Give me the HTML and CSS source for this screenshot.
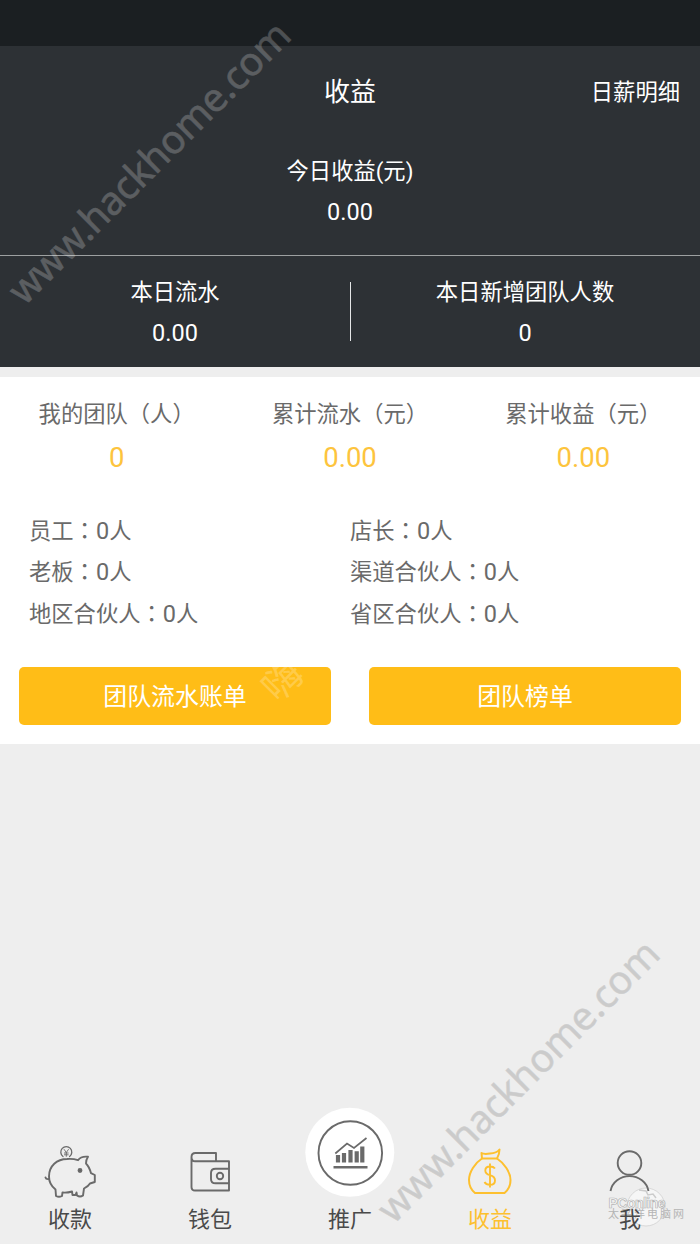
FILE: index.html
```html
<!DOCTYPE html>
<html lang="zh-CN">
<head>
<meta charset="utf-8">
<title>收益</title>
<link rel="stylesheet" href="styles.css">
</head>
<body>
<div class="screen">
  <div class="status"></div>
  <header class="hero">
    <div class="bar"><span></span><h1>收益</h1><a class="detail">日薪明细</a></div>
    <div class="today"><div>今日收益(元)</div><div class="num">0.00</div></div>
    <div class="daily">
      <div class="cell"><div>本日流水</div><div class="num">0.00</div></div>
      <div class="divider"></div>
      <div class="cell"><div>本日新增团队人数</div><div class="num">0</div></div>
    </div>
  </header>
  <main class="panel">
    <div class="totals">
      <div><div class="label">我的团队（人）</div><div class="value">0</div></div>
      <div><div class="label">累计流水（元）</div><div class="value">0.00</div></div>
      <div><div class="label">累计收益（元）</div><div class="value">0.00</div></div>
    </div>
    <div class="roles">
      <div>员工<i lang="zh-TW">：</i><em>0</em>人</div><div>店长<i lang="zh-TW">：</i><em>0</em>人</div>
      <div>老板<i lang="zh-TW">：</i><em>0</em>人</div><div>渠道合伙人<i lang="zh-TW">：</i><em>0</em>人</div>
      <div>地区合伙人<i lang="zh-TW">：</i><em>0</em>人</div><div>省区合伙人<i lang="zh-TW">：</i><em>0</em>人</div>
    </div>
    <div class="actions"><div class="btn">团队流水账单</div><div class="btn">团队榜单</div></div>
  </main>
  <nav class="tabs">
    <div class="tab">
      <svg class="icon" viewBox="40 1140 60 64" fill="none" stroke="#6a6a6a" stroke-width="1.9" stroke-linecap="round" stroke-linejoin="round">
        <path d="M63 1156.500A5.500 5.500 0 1 1 69.600 1156.500" stroke-width="1.300"/>
        <path d="M64.200 1149.500l2.100 3 2.100-3M66.300 1152.500v3.800M64.400 1153h3.800M64.400 1154.800h3.800" stroke-width="0.900"/>
        <path d="M78 1160.200C80 1157.500 84 1156.300 88 1156.800C86.500 1159 86 1161 86 1163.500C88.500 1166 90 1169.500 91 1173.200L94.800 1175V1182L90 1183.500C88.500 1186 86 1187.500 84 1188.500L83 1195.500Q80 1197.500 77 1195.500L76.500 1192.500L75.500 1195H72.500L72 1191.500Q67 1193 62.500 1192.500L62 1196Q59 1197.500 56 1196L55.500 1189.500C51 1186 49 1181 49 1176.500C49 1166 57 1159 67 1159Q73 1158.500 78 1160.200Z"/>
        <path d="M49 1179Q46 1179.500 45.500 1177.500"/>
        <circle cx="80" cy="1170.500" r="1.500" fill="#555"/>
      </svg><span>收款</span>
    </div>
    <div class="tab">
      <svg class="icon" viewBox="180 1140 60 64" fill="none" stroke="#6a6a6a" stroke-width="1.900" stroke-linejoin="round">
        <path d="M216 1161V1153H195.500Q191.500 1153 191.500 1157V1187Q191.500 1190.500 195 1190.500H229V1161.300H195Q191.500 1161.300 191.500 1157"/>
        <path d="M229 1168.700H215.500Q211 1168.700 211 1173V1179Q211 1183.300 215.500 1183.300H229"/>
        <circle cx="220" cy="1176" r="3.200"/>
      </svg><span>钱包</span>
    </div>
    <div class="tab raised">
      <svg class="disc" viewBox="305 1107 90 90" fill="none" stroke="#6a6a6a">
        <circle cx="349.800" cy="1152.300" r="44.500" fill="#fff" stroke="none"/>
        <circle cx="350.300" cy="1153" r="31.800" stroke-width="1.900"/>
        <path d="M335.300 1153.500L347 1143.500L354 1148L366.500 1138" stroke-width="1.700"/>
        <path d="M338 1162.500V1155M344 1162.500V1153M350.500 1162.500V1150M356.700 1162.500V1151.300M362.300 1162.500V1146.500" stroke-width="4.200"/>
        <path d="M333.500 1167.200H367.500" stroke-width="2.500"/>
      </svg><span>推广</span>
    </div>
    <div class="tab active">
      <svg class="icon" viewBox="460 1140 60 64" fill="none" stroke="#fdc02f" stroke-width="2" stroke-linejoin="round">
        <path d="M482 1158.500L481.500 1153Q484 1154.500 490 1153.500Q497 1153 499.500 1149.500Q499.500 1154 497 1158.500Z"/>
        <path d="M482 1158.500C475 1163 469 1172 469 1180Q469 1188 475 1193H504.500Q510.500 1188 510.500 1180C510.500 1172 504 1163 497 1158.500"/>
        <path d="M495 1168.500Q493.500 1166.500 490 1166.500Q485.300 1166.500 485.300 1170.500Q485.300 1174 490 1175.200Q495 1176.500 495 1180.500Q495 1184.800 490 1184.800Q486 1184.800 484.500 1182M490 1163.500V1187.500" stroke-width="1.900"/>
      </svg><span>收益</span>
    </div>
    <div class="tab">
      <svg class="icon" viewBox="600 1140 60 64" fill="none" stroke="#6a6a6a" stroke-width="1.900">
        <circle cx="629.500" cy="1163" r="11.800"/>
        <path d="M610.500 1191A19.300 18 0 0 1 648.500 1191"/>
      </svg><span>我</span>
    </div>
  </nav>
  <svg class="pc" viewBox="604 1184 84 46">
    <circle cx="646" cy="1207" r="19" fill="#f6f6f6" stroke="#d0d0d0" stroke-width=".8"/>
    <path d="M639 1190l7 1 2 4 5-1 3 4" fill="none" stroke="#ccc" stroke-width="1.500"/>
    <text x="608.500" y="1208" class="brand" textLength="57">PConline</text>
    <text x="608" y="1218" class="sub" textLength="76">太平洋电脑网</text>
  </svg>
  <svg class="marks" viewBox="0 0 700 1244">
    <g class="site">
      <text transform="translate(24.500 306.500) rotate(-45)" textLength="380" fill="#fff" stroke="#fff" opacity=".22">www.hackhome.com</text>
      <text transform="translate(393.500 1225) rotate(-45)" textLength="380" fill="#000" stroke="#000" opacity=".14">www.hackhome.com</text>
    </g>
    <text class="hai" transform="translate(280 678) rotate(-45)">嗨</text>
  </svg>
</div>
</body>
</html>
```
FILE: styles.css
```css
* { box-sizing: border-box; }
body { margin: 0; font-family: Roboto, "Noto Sans CJK SC", sans-serif; font-size: 22.3px; line-height: 42px; color: #6a6a6a; }
.screen { position: relative; width: 700px; height: 1244px; background: #eee; display: flex; flex-direction: column; overflow: hidden; }
.status { height: 46px; background: #1b1f22; }
.hero { height: 321px; background: #2d3135; color: #fff; }
.bar { height: 90px; padding: 2px 20px 0; display: grid; grid-template-columns: 1fr auto 1fr; align-items: center; }
.bar h1 { margin: 0; font-size: 26px; font-weight: 400; }
.detail { text-align: right; }
.num { font-size: 23.5px; }
.today { height: 120px; padding-top: 15px; line-height: 41px; text-align: center; border-bottom: 1px solid #9da0a1; }
.daily { display: flex; height: 111px; padding-top: 16px; line-height: 41px; text-align: center; }
.cell { flex: 1; }
.divider { width: 1px; height: 59px; margin: 10px -1px 0 0; background: #e4e6e7; }
.panel { height: 367px; margin-top: 10px; background: #fff; }
.totals { display: grid; grid-template-columns: repeat(3, 1fr); height: 134px; padding-top: 16px; text-align: center; }
.value { font-size: 27.5px; line-height: 46px; color: #fdc43d; }
.roles { display: grid; grid-template-columns: 321px 1fr; grid-auto-rows: 41.300px; align-content: start; height: 156px; padding-left: 29px; line-height: 41.300px; }
.roles i { font-style: normal; font-family: "Noto Sans CJK TC", sans-serif; line-height: 0; }
.roles em { font-style: normal; font-size: 23.5px; line-height: 0; }
.actions { display: flex; gap: 38px; padding: 0 19px; }
.btn { flex: 1; height: 58px; border-radius: 5px; background: #ffbd17; color: #fff; font-size: 23.9px; line-height: 61px; text-align: center; }
.tabs { position: relative; z-index: 1; margin-top: auto; height: 138px; display: flex; color: #4a4a4a; }
.tab { flex: 1; display: flex; flex-direction: column; align-items: center; padding-top: 34px; line-height: 32px; font-size: 22px; }
.icon { width: 60px; height: 64px; flex: none; }
.raised { padding-top: 1px; }
.disc { width: 90px; height: 90px; flex: none; margin-bottom: 7px; }
.active { color: #fdc02f; }
.marks { position: absolute; z-index: 2; inset: 0; width: 700px; height: 1244px; pointer-events: none; }
.site { font: 39.3px "Noto Sans", sans-serif; stroke-width: .5px; }
.hai { font: 39px "Noto Sans CJK SC", sans-serif; fill: #fff; fill-opacity: .22; text-anchor: middle; dominant-baseline: central; }
.pc { position: absolute; left: 604px; top: 1184px; width: 84px; height: 46px; }
.brand { font: bold 14px "Liberation Sans", sans-serif; fill: #fafafa; stroke: #b4b4b4; stroke-width: .7px; }
.sub { font: 11px "Noto Sans CJK SC", sans-serif; fill: #b4b4b4; }
```
